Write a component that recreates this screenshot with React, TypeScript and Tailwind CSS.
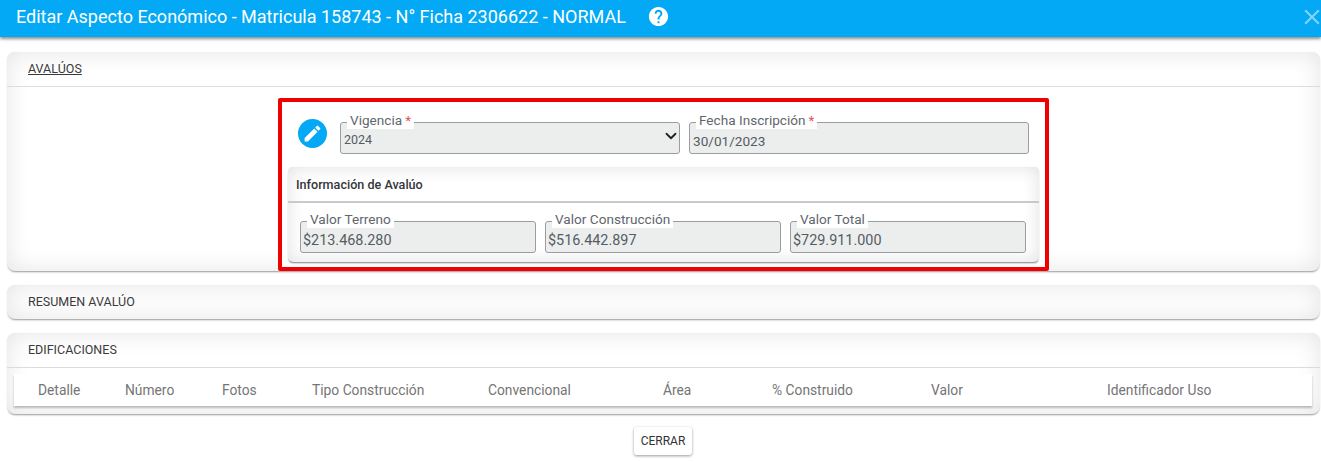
import { MdClose, MdEdit, MdHelp } from 'react-icons/md';

const columns = [
  'Detalle',
  'Número',
  'Fotos',
  'Tipo Construcción',
  'Convencional',
  'Área',
  '% Construido',
  'Valor',
  'Identificador Uso',
];

function Field({ label, value, required, valueClass }: { label: string; value: string; required?: boolean; valueClass: string }) {
  return (
    <div className="relative h-[32px] rounded-[3px] border border-[#9a9da0] bg-[#eceeee] pl-[3px] pt-[9px] leading-[18px] text-[#555c63]">
      <span className="absolute left-[6px] top-[-12px] flex h-[18px] items-center bg-white px-[3px] text-[13.6px] text-[#5f666d]">
        {label}
        {required && <span className="ml-[3px] text-[#e5505f]">*</span>}
      </span>
      <span className={valueClass}>{value}</span>
    </div>
  );
}

function CardHeader({ title, underline, line }: { title: string; underline?: boolean; line?: boolean }) {
  return (
    <div
      className={`flex items-center rounded-t-[8px] px-[21px] text-[12.5px] text-[#3a3a3a] ${line ? 'h-[35px] border-b border-[#dcdcdc]' : 'h-[34px]'} ${
        underline ? 'underline' : ''
      }`}
    >
      {title}
    </div>
  );
}

export default function App() {
  return (
    <div className="h-[462px] overflow-hidden bg-white font-['Roboto',sans-serif]">
      {/* Header */}
      <header className="flex h-[37px] items-center justify-between bg-[#03a9f4] pb-[4px] pl-[16px] text-white shadow-[0_2px_3px_rgba(0,0,0,0.45)]">
        <div className="flex items-center">
          <h1 className="text-[18px] font-normal">Editar Aspecto Económico - Matricula 158743 - N° Ficha 2306622 - NORMAL</h1>
          <MdHelp className="ml-[21px] h-[23px] w-[23px]" />
        </div>
        <MdClose className="mr-[-4px] h-[26px] w-[26px] opacity-50" />
      </header>

      <div className="flex flex-col gap-[14px] pl-[7px] pr-[1px] pt-[15px]">
        {/* Avaluos */}
        <section className="h-[219px] rounded-[8px] shadow-[0_2px_2px_-1px_rgba(0,0,0,0.4),0_0_1px_rgba(0,0,0,0.1),inset_0_0_24px_rgba(0,0,0,0.11)]">
          <CardHeader title="AVALÚOS" underline line />
          <div className="flex justify-center pt-[11px]">
            <div className="h-[173px] w-[771px] rounded-[2px] border-[4px] border-[#f00000] bg-white px-[6px] pt-[20px]">
              <div className="flex items-start">
                <div className="ml-[10px] mt-[-3px] flex h-[29px] w-[29px] items-center justify-center rounded-full bg-[#03a9f4] text-white">
                  <MdEdit className="h-[21px] w-[21px]" />
                </div>
                <div className="ml-[13px] grid w-[689px] grid-cols-2 gap-[9px]">
                  <div className="relative">
                    <Field label="Vigencia" value="2024" required valueClass="block text-[12.5px] leading-[16px]" />
                    <svg className="absolute right-[3px] top-[8px] h-[12px] w-[12px] text-[#222]" viewBox="0 0 16 16" fill="none" stroke="currentColor" strokeWidth="2.4" strokeLinecap="round" strokeLinejoin="round">
                      <path d="M2 5l6 6 6-6" />
                    </svg>
                  </div>
                  <Field label="Fecha Inscripción" value="30/01/2023" required valueClass="text-[13.6px]" />
                </div>
              </div>
              <div className="mt-[13px] h-[95px] rounded-[5px] shadow-[0_2px_2px_-1px_rgba(0,0,0,0.5),0_0_1px_rgba(0,0,0,0.15),inset_0_0_18px_rgba(0,0,0,0.12)]">
                <div className="flex h-[36px] items-center rounded-t-[5px] border-b-2 border-[#c9c9c9] px-[8px] pt-[2px] text-[12.6px] font-medium text-[#33373b]">
                  Información de Avalúo
                </div>
                <div className="grid grid-cols-3 gap-[9px] pl-[12px] pr-[13px] pt-[18px]">
                  <Field label="Valor Terreno" value="$213.468.280" valueClass="ml-[-1px] text-[14.4px]" />
                  <Field label="Valor Construcción" value="$516.442.897" valueClass="ml-[-1px] text-[14.4px]" />
                  <Field label="Valor Total" value="$729.911.000" valueClass="ml-[-1px] text-[14.4px]" />
                </div>
              </div>
            </div>
          </div>
        </section>

        {/* Resumen */}
        <section className="h-[34px] rounded-[8px] shadow-[0_2px_2px_-1px_rgba(0,0,0,0.4),0_0_1px_rgba(0,0,0,0.1),inset_0_0_24px_rgba(0,0,0,0.11)]">
          <CardHeader title="RESUMEN AVALÚO" />
        </section>

        {/* Edificaciones */}
        <section className="h-[81px] rounded-[8px] shadow-[0_2px_2px_-1px_rgba(0,0,0,0.4),0_0_1px_rgba(0,0,0,0.1),inset_0_0_24px_rgba(0,0,0,0.11)]">
          <CardHeader title="EDIFICACIONES" line />
          <div className="ml-[7px] mr-[8px] mt-[6px] grid h-[32px] grid-cols-[87px_97px_90px_176px_175px_109px_159px_176px_1fr] items-center bg-white pl-[24px] text-[13.8px] text-[#757575] shadow-[0_2px_2px_rgba(0,0,0,0.25)]">
            {columns.map((column) => (
              <span key={column}>{column}</span>
            ))}
          </div>
        </section>

        <div className="mt-[-1px] flex justify-center pr-[1px]">
          <button className="h-[28px] w-[58px] rounded-[3px] bg-white text-[12px] text-[#333] shadow-[0_1px_3px_rgba(0,0,0,0.4)]">CERRAR</button>
        </div>
      </div>
    </div>
  );
}
